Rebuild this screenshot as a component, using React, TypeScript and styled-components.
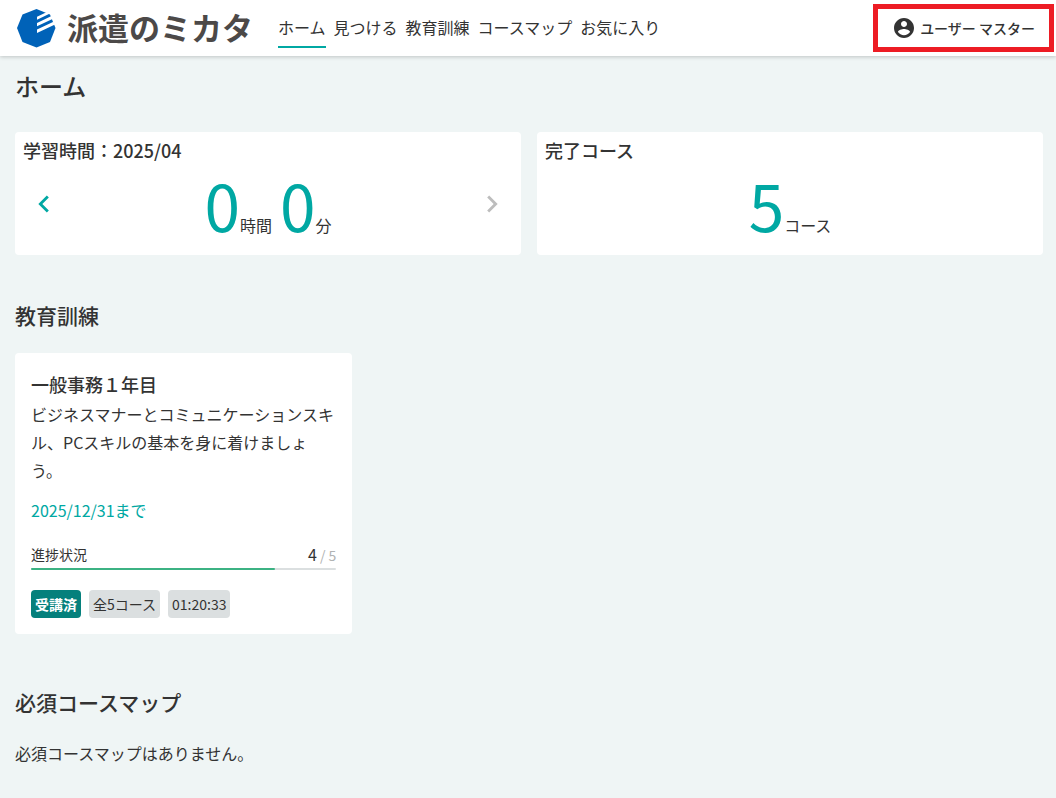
import React from "react";
import styled, { createGlobalStyle } from "styled-components";

const teal = "#00a8a3";

const GlobalStyle = createGlobalStyle`
  *, *::before, *::after { box-sizing: border-box; }
  html { background: #eff5f5; }
  body {
    margin: 0;
    color: #333;
    font: 400 16px/28px "Noto Sans CJK JP", sans-serif;
  }
  h1, h2, h3, p { margin: 0; }
  h1, h2, h3 { font-weight: 500; }
  button { font: inherit; color: inherit; background: none; border: 0; padding: 0; cursor: pointer; }
`;

const Header = styled.header`
  display: flex;
  align-items: center;
  height: 56px;
  padding: 0 2px 0 16px;
  background: #fff;
  box-shadow: 0 1px 4px rgba(0, 0, 0, 0.2);
`;

const Brand = styled.a`
  display: flex;
  align-items: center;
  gap: 10px;
  width: 262px;
  color: #4c4948;
  font-size: 31px;
  font-weight: 700;
  line-height: 36px;
  text-decoration: none;
  white-space: nowrap;
`;

const BrandName = styled.span`
  padding-bottom: 2px;
`;

const Nav = styled.nav`
  display: flex;
  flex: 1;
  gap: 8px;
`;

const NavLink = styled.a<{ $active?: boolean }>`
  padding: 1px 0;
  border-bottom: 2px solid ${(p) => (p.$active ? teal : "transparent")};
  color: inherit;
  line-height: 36px;
  text-decoration: none;
  white-space: nowrap;
`;

const UserButton = styled.button`
  display: flex;
  align-items: center;
  gap: 4px;
  height: 48px;
  padding: 0 14px;
  border: 5px solid #ed1c24;
  font-size: 14px;
  font-weight: 500;
  white-space: nowrap;
`;

const Main = styled.main`
  padding: 14px 13px 30px 15px;
`;

const PageTitle = styled.h1`
  margin-bottom: 30px;
  font-size: 24px;
  line-height: 32px;
`;

const Stats = styled.div`
  display: grid;
  grid-template-columns: 1fr 1fr;
  gap: 16px;
`;

const Card = styled.section`
  background: #fff;
  border-radius: 4px;
`;

const StatCard = styled(Card)`
  padding: 6px 8px 9px;
`;

const StatTitle = styled.h2`
  font-size: 18px;
  line-height: 24px;
`;

const StatBody = styled.div`
  display: flex;
  align-items: center;
  height: 84px;
  padding: 0 4px;
`;

const Figures = styled.p`
  display: flex;
  flex: 1;
  justify-content: center;
  gap: 8px;
  padding-top: 20px;
  line-height: 84px;
`;

const Figure = styled.strong`
  color: ${teal};
  font-size: 64px;
  font-weight: 400;
`;

const StepButton = styled.button`
  display: flex;
  color: ${teal};
  &:disabled { color: #bdbdbd; cursor: default; }
`;

const Section = styled.section<{ $top: number }>`
  margin-top: ${(p) => p.$top}px;
`;

const SectionTitle = styled.h2`
  margin-bottom: 24px;
  font-size: 21px;
  line-height: 28px;
`;

const EmptyNote = styled.p`
  line-height: 26px;
`;

const CourseGrid = styled.div`
  display: grid;
  grid-template-columns: repeat(3, 1fr);
  gap: 8px;
`;

const CourseCard = styled(Card)`
  padding: 15px 16px 16px;
`;

const CourseTitle = styled.h3`
  font-size: 18px;
  line-height: 32px;
`;

const Deadline = styled.p`
  margin-top: 12px;
  color: ${teal};
`;

const ProgressRow = styled.div`
  display: flex;
  justify-content: space-between;
  height: 26px;
  margin-top: 18px;
  font-size: 14px;
  line-height: 24px;
`;

const Done = styled.span`
  font-size: 16px;
`;

const Total = styled.span`
  color: #b0b3b3;
`;

const Track = styled.div`
  height: 2px;
  border-radius: 1px;
  background: #dbdfe0;
`;

const Fill = styled.div`
  height: 2px;
  border-radius: 1px;
  background: #3cb283;
`;

const Chips = styled.div`
  display: flex;
  gap: 8px;
  margin-top: 20px;
`;

const Chip = styled.span<{ $solid?: boolean }>`
  padding: 0 4px;
  border-radius: 4px;
  background: ${(p) => (p.$solid ? "#05807c" : "#dbdfe0")};
  color: ${(p) => (p.$solid ? "#fff" : "inherit")};
  font-size: 14px;
  font-weight: ${(p) => (p.$solid ? 700 : 400)};
  white-space: nowrap;
`;

const LogoMark = () => (
  <svg width="41" height="40" viewBox="0 0 41 40" aria-hidden="true">
    <path d="M20.5 1 34 6.5 39.500 20 34 34 20.500 39.500 6.500 34 1 20 6.500 6.500Z" fill="#0062b8" />
    <path d="M21 8.800 31 4 34 5.500 21 11.700ZM21 15 35.500 8 37 10.700 21 18.200ZM21 21.500 37.500 13.700 39 16.500 21 25Z" fill="#fff" />
  </svg>
);

const UserIcon = () => (
  <svg width="24" height="24" viewBox="0 0 24 24" fill="currentColor" aria-hidden="true">
    <path d="M12 2C6.480 2 2 6.480 2 12s4.480 10 10 10 10-4.480 10-10S17.520 2 12 2zm0 3c1.660 0 3 1.340 3 3s-1.340 3-3 3-3-1.340-3-3 1.340-3 3-3zm0 14.200c-2.500 0-4.710-1.280-6-3.220.030-1.990 4-3.080 6-3.080 1.990 0 5.970 1.090 6 3.080-1.290 1.940-3.500 3.220-6 3.220z" />
  </svg>
);

const Chevron = ({ d }: { d: string }) => (
  <svg width="34" height="34" viewBox="0 0 24 24" fill="currentColor" aria-hidden="true">
    <path d={d} />
  </svg>
);

const links = ["ホーム", "見つける", "教育訓練", "コースマップ", "お気に入り"];

export default function App() {
  const done = 4;
  const total = 5;
  return (
    <>
      <GlobalStyle />
      <Header>
        <Brand href="#">
          <LogoMark />
          <BrandName>派遣のミカタ</BrandName>
        </Brand>
        <Nav>
          {links.map((label, i) => (
            <NavLink key={label} href="#" $active={i === 0}>{label}</NavLink>
          ))}
        </Nav>
        <UserButton type="button">
          <UserIcon />
          ユーザー マスター
        </UserButton>
      </Header>
      <Main>
        <PageTitle>ホーム</PageTitle>
        <Stats>
          <StatCard>
            <StatTitle>学習時間：2025/04</StatTitle>
            <StatBody>
              <StepButton type="button" aria-label="前の月">
                <Chevron d="M15.410 16.580 10.830 12l4.580-4.590L14 6l-6 6 6 6z" />
              </StepButton>
              <Figures>
                <span><Figure>0</Figure>時間</span>
                <span><Figure>0</Figure>分</span>
              </Figures>
              <StepButton type="button" aria-label="次の月" disabled>
                <Chevron d="M8.590 16.580 13.170 12 8.590 7.410 10 6l6 6-6 6z" />
              </StepButton>
            </StatBody>
          </StatCard>
          <StatCard>
            <StatTitle>完了コース</StatTitle>
            <StatBody>
              <Figures>
                <span><Figure>5</Figure>コース</span>
              </Figures>
            </StatBody>
          </StatCard>
        </Stats>
        <Section $top={46}>
          <SectionTitle>教育訓練</SectionTitle>
          <CourseGrid>
            <CourseCard>
              <CourseTitle>一般事務１年目</CourseTitle>
              <p>ビジネスマナーとコミュニケーションスキル、PCスキルの基本を身に着けましょう。</p>
              <Deadline>2025/12/31まで</Deadline>
              <ProgressRow>
                <span id="progress-label">進捗状況</span>
                <span><Done>{done}</Done><Total> / {total}</Total></span>
              </ProgressRow>
              <Track role="progressbar" aria-labelledby="progress-label" aria-valuenow={done} aria-valuemin={0} aria-valuemax={total}>
                <Fill style={{ width: `${(done / total) * 100}%` }} />
              </Track>
              <Chips>
                <Chip $solid>受講済</Chip>
                <Chip>全5コース</Chip>
                <Chip>01:20:33</Chip>
              </Chips>
            </CourseCard>
          </CourseGrid>
        </Section>
        <Section $top={54}>
          <SectionTitle>必須コースマップ</SectionTitle>
          <EmptyNote>必須コースマップはありません。</EmptyNote>
        </Section>
      </Main>
    </>
  );
}
